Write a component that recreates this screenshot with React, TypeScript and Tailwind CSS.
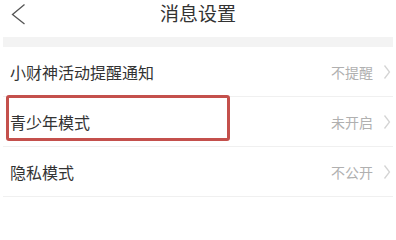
import React from "react";

const font = { fontFamily: '"Noto Sans CJK SC", "Noto Sans", sans-serif' };

function Chevron() {
  return (
    <svg width="8" height="16" viewBox="0 0 8 16" className="ml-[10px]">
      <path d="M1.5 1.5 L6.5 8 L1.5 14.5" fill="none" stroke="#d4d4d4" strokeWidth="1.3" />
    </svg>
  );
}

function Row({ label, value, highlight }: { label: string; value: string; highlight?: boolean }) {
  return (
    <div className="relative mx-[3px] flex h-[50px] items-center justify-between border-b border-[#f0f0f0] pl-[7px] pr-[2px]">
      <span className="text-[16px] leading-none text-[#333]">{label}</span>
      <div className="flex items-center">
        <span className="text-[14px] leading-none text-[#b0b0b0]">{value}</span>
        <Chevron />
      </div>
      {highlight && (
        <div className="pointer-events-none absolute left-[3px] top-[-2px] h-[46px] w-[224px] rounded-[3px] border-[3px] border-[#c4504c]" />
      )}
    </div>
  );
}

export default function App() {
  return (
    <div className="h-[203px] w-[396px] overflow-hidden bg-white" style={font}>
      <div className="relative flex h-[37px] items-start justify-center pt-[2px]">
        <svg width="16" height="22" viewBox="0 0 16 22" className="absolute left-[10px] top-[3px]">
          <path d="M14.5 1.5 L2.5 11.5 L14.5 21" fill="none" stroke="#555" strokeWidth="1.3" />
        </svg>
        <span className="text-[19px] leading-[22px] text-[#333]">消息设置</span>
      </div>
      <div className="mx-[3px] h-[10px] bg-[#f3f3f3]" />
      <Row label="小财神活动提醒通知" value="不提醒" />
      <Row label="青少年模式" value="未开启" highlight />
      <Row label="隐私模式" value="不公开" />
    </div>
  );
}
